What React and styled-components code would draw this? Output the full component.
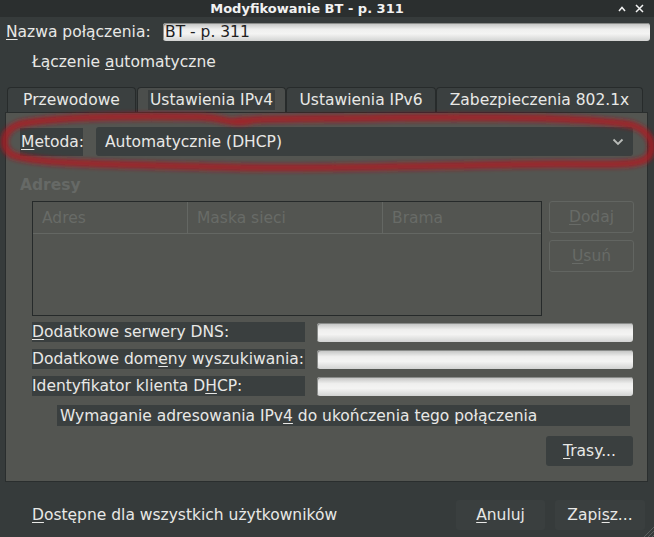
import React from "react";
import styled, { createGlobalStyle } from "styled-components";

const GlobalStyle = createGlobalStyle`
  html, body {
    margin: 0;
    padding: 0;
    background: #363b3b;
  }
  body {
    font-family: "DejaVu Sans", "Liberation Sans", sans-serif;
  }
  * {
    box-sizing: border-box;
  }
`;

const Window = styled.div`
  position: relative;
  width: 654px;
  height: 537px;
  overflow: hidden;
  display: flex;
  flex-direction: column;
  background: #363b3b;
  color: #e8e8e6;
  font-size: 15.5px;
`;

const TitleBar = styled.div`
  height: 17px;
  display: flex;
  align-items: center;
  background: #2b2f2f;
`;

const Title = styled.div`
  flex: 1;
  text-align: center;
  font-size: 13px;
  font-weight: bold;
  color: #f2f2f2;
  line-height: 17px;
`;

const Controls = styled.div`
  width: 40px;
  display: flex;
  align-items: center;
  gap: 9px;
  padding-left: 4px;
`;

const U = styled.u`
  text-decoration: underline;
  text-underline-offset: 2px;
  text-decoration-thickness: 1px;
`;

const NameRow = styled.div`
  display: flex;
  align-items: center;
  height: 18px;
  margin-top: 6px;
  padding-left: 6px;
`;

const NameLabel = styled.span`
  width: 157px;
`;

const Entry = styled.div`
  width: ${(p) => p.$w}px;
  height: ${(p) => p.$h || 19}px;
  border-radius: 3px;
  background: linear-gradient(to bottom, #bfc0bf 0%, #efefee 35%, #f4f4f3 60%, #d2d3d2 100%);
  box-shadow: inset 1px 1px 0 #8a8c8a;
  color: #1e1e1e;
  padding-left: 2px;
  line-height: ${(p) => p.$h || 19}px;
  white-space: nowrap;
`;

const AutoRow = styled.div`
  height: 20px;
  margin-top: 11px;
  padding-left: 32px;
  line-height: 20px;
`;

const TabBar = styled.div`
  display: flex;
  height: 25px;
  margin-top: 15px;
  padding-left: 7px;
`;

const Tab = styled.div`
  width: ${(p) => p.$w}px;
  height: 25px;
  display: flex;
  align-items: center;
  justify-content: center;
  border: 1px solid #272b2b;
  border-bottom: none;
  border-radius: 4px 4px 0 0;
  background: ${(p) => (p.$active ? "#4b4e4c" : "#3b4040")};
  margin-right: ${(p) => (p.$gap ? 1 : 0)}px;
`;

const TabText = styled.span`
  padding: 1px 2px;
  white-space: nowrap;
  background: ${(p) => (p.$active ? "#3a3e3e" : "transparent")};
`;

const Panel = styled.div`
  height: 370px;
  margin: 0 6px 0 5px;
  background: #535551;
  border: 1px solid #2a2e2e;
  display: flex;
  flex-direction: column;
`;

const MethodRow = styled.div`
  display: flex;
  align-items: center;
  gap: 13px;
  margin-top: 14px;
  padding-left: 14px;
`;

const DarkLabel = styled.div`
  width: ${(p) => p.$w}px;
  height: ${(p) => p.$h}px;
  background: #3a3f3f;
  display: flex;
  align-items: center;
  padding-left: ${(p) => p.$pl || 0}px;
  white-space: nowrap;
`;

const Combo = styled.div`
  width: 537px;
  height: 29px;
  border-radius: 3px;
  background: #3a3f3f;
  display: flex;
  align-items: center;
  justify-content: space-between;
  padding: 0 9px;
`;

const Section = styled.div`
  height: 18px;
  margin-top: 20px;
  padding-left: 14px;
  font-weight: bold;
  color: #666966;
  line-height: 18px;
`;

const AddrArea = styled.div`
  display: flex;
  gap: 7px;
  margin-top: 7px;
  padding-left: 26px;
`;

const Table = styled.div`
  width: 510px;
  height: 115px;
  border: 1px solid #262a2a;
`;

const HeadRow = styled.div`
  display: grid;
  grid-template-columns: 154px 195px 1fr;
  height: 32px;
  border-bottom: 1px solid #646763;
`;

const HeadCell = styled.div`
  display: flex;
  align-items: center;
  padding-left: 9px;
  color: #686b67;
  border-left: ${(p) => (p.$first ? "none" : "1px solid #646763")};
`;

const SideButtons = styled.div`
  display: flex;
  flex-direction: column;
  gap: 7px;
`;

const GhostButton = styled.div`
  width: 85px;
  height: 32px;
  border: 1px solid #626561;
  border-radius: 3px;
  display: flex;
  align-items: center;
  justify-content: center;
  color: #686b67;
`;

const FieldGrid = styled.div`
  display: grid;
  grid-template-columns: 273px 316px;
  column-gap: 12px;
  row-gap: 7px;
  margin-top: 6px;
  padding-left: 26px;
  align-items: center;
`;

const CheckRow = styled.div`
  margin-top: 9px;
  padding-left: 51px;
`;

const ButtonRow = styled.div`
  display: flex;
  justify-content: flex-end;
  margin-top: 10px;
  padding-right: 14px;
`;

const DarkButton = styled.div`
  width: ${(p) => p.$w}px;
  height: 30px;
  border-radius: 3px;
  background: #3a3f3f;
  display: flex;
  align-items: center;
  justify-content: center;
`;

const Footer = styled.div`
  display: flex;
  align-items: center;
  height: 30px;
  margin-top: 18px;
  padding: 0 9px 0 32px;
  gap: 10px;
`;

const FooterText = styled.span`
  flex: 1;
`;

const Annotation = styled.svg`
  position: absolute;
  left: 0;
  top: 0;
  pointer-events: none;
`;

const Grip = styled.svg`
  position: absolute;
  right: 0;
  bottom: 0;
`;

const Chevron = () => (
  <svg width="12" height="8" viewBox="0 0 12 8">
    <polyline points="1.5,1.5 6,6 10.5,1.5" fill="none" stroke="#b9bcb9" strokeWidth="1.8" />
  </svg>
);

const rows = [
  <><U>D</U>odatkowe serwery DNS:</>,
  <>Dodatkowe dom<U>e</U>ny wyszukiwania:</>,
  <>Identyfikator klienta D<U>H</U>CP:</>,
];

export default function App() {
  return (
    <Window>
      <GlobalStyle />
      <TitleBar>
        <Title>Modyfikowanie BT - p. 311</Title>
        <Controls>
          <svg width="8" height="8" viewBox="0 0 8 8">
            <polyline points="1,6 4,2.5 7,6" fill="none" stroke="#f2f2f2" strokeWidth="1.5" />
          </svg>
          <svg width="9" height="9" viewBox="0 0 9 9">
            <path d="M1 1 L8 8 M8 1 L1 8" stroke="#f2f2f2" strokeWidth="1.5" />
          </svg>
        </Controls>
      </TitleBar>

      <NameRow>
        <NameLabel>
          <U>N</U>azwa połączenia:
        </NameLabel>
        <Entry $w={487} $h={18}>BT - p. 311</Entry>
      </NameRow>

      <AutoRow>
        Łączenie <U>a</U>utomatyczne
      </AutoRow>

      <TabBar>
        <Tab $w={129} $gap>
          <TabText>Przewodowe</TabText>
        </Tab>
        <Tab $w={149} $active>
          <TabText $active>Ustawienia IPv4</TabText>
        </Tab>
        <Tab $w={150}>
          <TabText>Ustawienia IPv6</TabText>
        </Tab>
        <Tab $w={207}>
          <TabText>Zabezpieczenia 802.1x</TabText>
        </Tab>
      </TabBar>

      <Panel>
        <MethodRow>
          <DarkLabel $w={63} $h={28} $pl={1}>
            <span>
              <U>M</U>etoda:
            </span>
          </DarkLabel>
          <Combo>
            <span>Automatycznie (DHCP)</span>
            <Chevron />
          </Combo>
        </MethodRow>

        <Section>Adresy</Section>

        <AddrArea>
          <Table>
            <HeadRow>
              <HeadCell $first>Adres</HeadCell>
              <HeadCell>Maska sieci</HeadCell>
              <HeadCell>Brama</HeadCell>
            </HeadRow>
          </Table>
          <SideButtons>
            <GhostButton>
              <span>
                <U>D</U>odaj
              </span>
            </GhostButton>
            <GhostButton>
              <span>
                <U>U</U>suń
              </span>
            </GhostButton>
          </SideButtons>
        </AddrArea>

        <FieldGrid>
          {rows.map((label, i) => (
            <React.Fragment key={i}>
              <DarkLabel $w={273} $h={20}>
                <span>{label}</span>
              </DarkLabel>
              <Entry $w={316} $h={19} />
            </React.Fragment>
          ))}
        </FieldGrid>

        <CheckRow>
          <DarkLabel $w={573} $h={21} $pl={3}>
            <span>
              Wymaganie adresowania IPv<U>4</U> do ukończenia tego połączenia
            </span>
          </DarkLabel>
        </CheckRow>

        <ButtonRow>
          <DarkButton $w={87}>
            <span>
              <U>T</U>rasy...
            </span>
          </DarkButton>
        </ButtonRow>
      </Panel>

      <Footer>
        <FooterText>
          <U>D</U>ostępne dla wszystkich użytkowników
        </FooterText>
        <DarkButton $w={89}>
          <span>
            <U>A</U>nuluj
          </span>
        </DarkButton>
        <DarkButton $w={90}>
          <span>
            Zapi<U>s</U>z...
          </span>
        </DarkButton>
      </Footer>

      <Annotation width="654" height="537" viewBox="0 0 654 537">
        <defs>
          <filter id="soft" x="-5%" y="-30%" width="110%" height="160%">
            <feGaussianBlur stdDeviation="2.2" />
          </filter>
        </defs>
        <path
          d="M 250 121 C 230 125 228 118 200 117 C 140 116 60 116 20 124 C 2 130 0 147 12 155 C 40 165 120 164 220 167 C 330 170 470 164 560 164 C 610 164 642 167 649 156 C 655 146 651 131 632 125 C 590 117 470 117 380 118 C 320 119 270 118 236 121"
          fill="none"
          stroke="rgba(172, 28, 34, 0.8)"
          strokeWidth="7.5"
          strokeLinecap="round"
          filter="url(#soft)"
        />
      </Annotation>

      <Grip width="12" height="12" viewBox="0 0 12 12">
        <path d="M12 2 L2 12 M12 6 L6 12 M12 10 L10 12" stroke="#5a5e5e" strokeWidth="1" />
      </Grip>
    </Window>
  );
}
